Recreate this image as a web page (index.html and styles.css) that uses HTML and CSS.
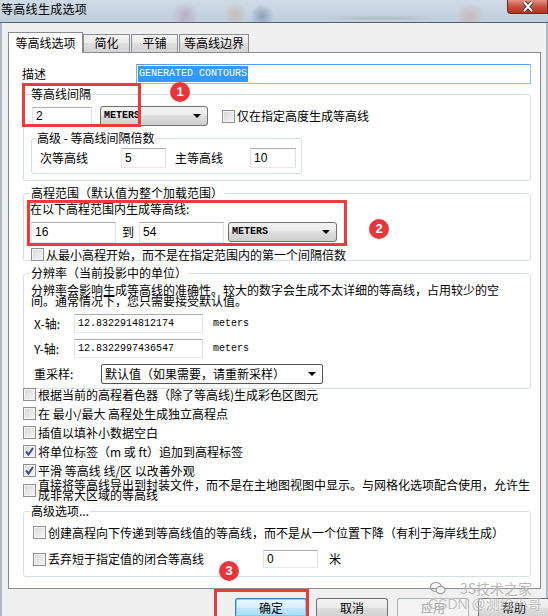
FILE: index.html
```html
<!DOCTYPE html>
<html lang="zh-CN">
<head>
    <meta charset="UTF-8">
    <meta name="viewport" content="width=device-width, initial-scale=1.0">
    <title>等高线生成选项</title>
    <link rel="stylesheet" href="styles.css">
</head>
<body>
<div class="window">
    <div class="titlebar">
        <span class="title">等高线生成选项</span>
        <span class="close">
            <svg width="14" height="11" viewBox="0 0 14 11"><path d="M3 1 L11 10 M11 1 L3 10" stroke="#3a3a3a" stroke-width="4"/><path d="M3 1 L11 10 M11 1 L3 10" stroke="#fff" stroke-width="2"/></svg>
        </span>
    </div>

    <div class="client">
        <div class="tabs">
            <div class="tab active">等高线选项</div>
            <div class="tab t-simplify">简化</div>
            <div class="tab t-tile">平铺</div>
            <div class="tab t-border">等高线边界</div>
        </div>

        <div class="panel">
            <div class="row desc-row">
                <span class="desc-label">描述</span>
                <div class="field desc-field mono"><span class="selected">GENERATED CONTOURS</span></div>
            </div>

            <!-- contour interval -->
            <fieldset class="group g-interval">
                <legend>等高线间隔</legend>
                <div class="row">
                    <div class="field num f-interval">2</div>
                    <div class="select mono-bold s-units">METERS<span class="arrow"></span></div>
                    <span class="cb cb-only"></span>
                    <span class="cb-text">仅在指定高度生成等高线</span>
                </div>
                <fieldset class="group sub">
                    <legend>高级 - 等高线间隔倍数</legend>
                    <div class="row">
                        <span>次等高线</span>
                        <div class="field num f-minor">5</div>
                        <span class="major-label">主等高线</span>
                        <div class="field num f-major">10</div>
                    </div>
                </fieldset>
            </fieldset>

            <!-- elevation range -->
            <fieldset class="group g-range">
                <legend>高程范围（默认值为整个加载范围）</legend>
                <div class="range-label">在以下高程范围内生成等高线:</div>
                <div class="row range-row">
                    <div class="field num f-range">16</div>
                    <span class="to">到</span>
                    <div class="field num f-range f-to">54</div>
                    <div class="select mono-bold s-range">METERS<span class="arrow"></span></div>
                </div>
                <div class="row check-row">
                    <span class="cb"></span>
                    <span class="cb-text">从最小高程开始，而不是在指定范围内的第一个间隔倍数</span>
                </div>
            </fieldset>

            <!-- resolution -->
            <fieldset class="group g-res">
                <legend>分辨率（当前投影中的单位）</legend>
                <div class="res-desc">分辨率会影响生成等高线的准确性。较大的数字会生成不太详细的等高线，占用较少的空间。通常情况下，您只需要接受默认值。</div>
                <div class="row axis-row">
                    <span class="axis-label">X-轴:</span>
                    <div class="field mono f-axis">12.8322914812174</div>
                    <span class="mono unit">meters</span>
                </div>
                <div class="row axis-row">
                    <span class="axis-label">Y-轴:</span>
                    <div class="field mono f-axis">12.8322997436547</div>
                    <span class="mono unit">meters</span>
                </div>
                <div class="row resample-row">
                    <span class="resample-label">重采样:</span>
                    <div class="select s-resample">默认值（如果需要，请重新采样）<span class="arrow"></span></div>
                </div>
            </fieldset>

            <div class="checks">
                <div class="row check-row"><span class="cb"></span><span class="cb-text">根据当前的高程着色器（除了等高线)生成彩色区图元</span></div>
                <div class="row check-row"><span class="cb"></span><span class="cb-text">在 最小/最大 高程处生成独立高程点</span></div>
                <div class="row check-row"><span class="cb"></span><span class="cb-text">插值以填补小数据空白</span></div>
                <div class="row check-row"><span class="cb on"><svg width="11" height="11" viewBox="0 0 11 11"><path d="M2 5.5 L4.5 8.5 L9 2" fill="none" stroke="#3c4f8c" stroke-width="2"/></svg></span><span class="cb-text">将单位标签（m 或 ft）追加到高程标签</span></div>
                <div class="row check-row"><span class="cb on"><svg width="11" height="11" viewBox="0 0 11 11"><path d="M2 5.5 L4.5 8.5 L9 2" fill="none" stroke="#3c4f8c" stroke-width="2"/></svg></span><span class="cb-text">平滑 等高线 线/区 以改善外观</span></div>
                <div class="row check-row two-line"><span class="cb"></span><span class="cb-text">直接将等高线导出到封装文件，而不是在主地图视图中显示。与网格化选项配合使用，允许生成非常大区域的等高线</span></div>
            </div>

            <!-- advanced -->
            <fieldset class="group g-adv">
                <legend>高级选项...</legend>
                <div class="row check-row">
                    <span class="cb"></span>
                    <span class="cb-text">创建高程向下传递到等高线值的等高线，而不是从一个位置下降（有利于海岸线生成）</span>
                </div>
                <div class="row discard-row">
                    <span class="cb"></span>
                    <span class="cb-text discard-label">丢弃短于指定值的闭合等高线</span>
                    <div class="field num f-discard">0</div>
                    <span class="meter">米</span>
                </div>
            </fieldset>
        </div>

        <div class="buttons">
            <div class="btn default">确定</div>
            <div class="btn">取消</div>
            <div class="btn disabled">应用</div>
            <div class="btn">帮助</div>
        </div>
    </div>

    <!-- annotations drawn over the screenshot -->
    <div class="mark mark-1"></div>
    <div class="mark mark-2"></div>
    <div class="mark mark-3"></div>
    <div class="badge badge-1">1</div>
    <div class="badge badge-2">2</div>
    <div class="badge badge-3">3</div>

    <div class="watermark wm-top">
        <svg width="16" height="14" viewBox="0 0 16 14"><ellipse cx="6" cy="6" rx="5.5" ry="4.5" fill="none" stroke="#9a9a9a" stroke-width="1.2"/><ellipse cx="10.5" cy="9" rx="4.5" ry="3.6" fill="#f4f4f4" stroke="#9a9a9a" stroke-width="1.2"/></svg>
        <span>3S技术之家</span>
    </div>
    <div class="watermark wm-bottom">CSDN @测绘小哥</div>
</div>
</body>
</html>
```

FILE: styles.css
```css
* {
    box-sizing: border-box;
}

html, body {
    margin: 0;
}

body {
    width: 548px;
    height: 616px;
    overflow: hidden;
    font-family: "Noto Sans CJK SC", "Noto Sans", sans-serif;
    font-size: 12px;
    line-height: 14px;
    color: #000;
    background: #f0f0f0;
}

.window {
    position: relative;
    height: 616px;
}

/* title bar */
.titlebar {
    height: 23px;
    display: flex;
    justify-content: space-between;
    align-items: flex-start;
    border-bottom: 1px solid #56616c;
    background:
        radial-gradient(circle at 185px 15px, rgba(170, 110, 150, 0.35), transparent 14px),
        radial-gradient(circle at 262px 16px, rgba(60, 90, 130, 0.4), transparent 12px),
        radial-gradient(circle at 235px 14px, rgba(190, 140, 90, 0.3), transparent 12px),
        radial-gradient(ellipse at 380px 18px, rgba(110, 150, 110, 0.3), transparent 60px),
        radial-gradient(circle at 470px 16px, rgba(200, 130, 110, 0.3), transparent 14px),
        linear-gradient(#cfdbe7, #bfcedc);
}

.title {
    font-size: 12px;
    line-height: 17px;
    letter-spacing: 0.3px;
    padding-left: 1px;
}

.close {
    width: 41px;
    height: 14px;
    display: flex;
    justify-content: center;
    align-items: center;
    border: 1px solid #6e2a20;
    border-top: none;
    border-radius: 0 0 0 4px;
    background: linear-gradient(#e39484, #c9503c 50%, #b5321f);
}

/* window client area */
.client {
    height: 593px;
    padding: 9px 5px 0 6px;
    border-left: 2px solid #aeb9c4;
    border-right: 2px solid #aeb9c4;
}

.tabs {
    display: flex;
    align-items: flex-end;
    height: 20px;
}

.tab {
    height: 18px;
    line-height: 16px;
    text-align: center;
    border: 1px solid #898c95;
    border-bottom: none;
    background: linear-gradient(#f3f3f3, #ebebeb 45%, #dedede 50%, #d4d4d4);
}

.tab.active {
    position: relative;
    z-index: 1;
    width: 75px;
    height: 21px;
    margin-bottom: -1px;
    line-height: 19px;
    background: #fff;
}

.t-simplify { width: 47px; }
.t-tile { width: 47px; margin-left: 1px; }
.t-border { width: 70px; margin-left: 1px; }

.panel {
    width: 533px;
    height: 537px;
    padding: 10px 9px 0 14px;
    border: 1px solid #898c95;
    background: #fff;
}

.row {
    display: flex;
    align-items: center;
}

/* inputs */
.field {
    height: 20px;
    display: flex;
    align-items: center;
    padding: 0 3px;
    background: #fff;
    border: 1px solid;
    border-color: #abadb3 #dbdfe6 #e3e9ef #e2e3ea;
    flex: none;
}

.num {
    font-family: "Liberation Sans", sans-serif;
    font-size: 12px;
}

.mono {
    font-family: "Liberation Mono", monospace;
    font-size: 10px;
}

.mono-bold {
    font-family: "Liberation Mono", monospace;
    font-size: 10px;
    font-weight: bold;
}

.select {
    height: 20px;
    display: flex;
    align-items: center;
    padding-left: 3px;
    border: 1px solid #707070;
    border-radius: 3px;
    background: linear-gradient(#f2f2f2, #ebebeb 45%, #dddddd 50%, #cfcfcf);
    flex: none;
}

.arrow {
    margin-left: auto;
    margin-right: 6px;
    width: 0;
    height: 0;
    border-left: 4px solid transparent;
    border-right: 4px solid transparent;
    border-top: 4px solid #000;
}

.cb {
    width: 13px;
    height: 13px;
    flex: none;
    display: flex;
    align-items: center;
    justify-content: center;
    border: 1px solid #8e8f8f;
    background: linear-gradient(135deg, #d6d6d6, #f7f7f7);
    box-shadow: inset 0 0 0 1px #f4f4f4;
}

.cb-text {
    margin-left: 2px;
    white-space: nowrap;
}

.check-row .cb-text {
    line-height: 13px;
}

/* description */
.desc-row {
    height: 21px;
}

.desc-label {
    margin-left: -1px;
}

.desc-field {
    width: 395px;
    margin-left: auto;
    padding-left: 1px;
    border-color: #569de5 #8fbfee #8fbfee #7eb4ea;
}

.selected {
    background: #3399ff;
    color: #fff;
    padding: 1px 1px;
}

/* group boxes */
.group {
    margin: 0;
    min-width: 0;
    padding: 0 0 0 7px;
    border: 1px solid #d5dfe5;
    border-radius: 3px;
}

.group legend {
    padding: 0 1px;
    margin-left: -1px;
    line-height: 14px;
}

.g-interval {
    margin-top: 3px;
    height: 94px;
    padding-top: 5px;
}

.f-interval {
    width: 60px;
    height: 18px;
    margin-left: 1px;
}

.s-units {
    width: 108px;
    margin-left: 8px;
}

.cb-only {
    margin-left: 14px;
}

.sub {
    width: 271px;
    height: 43px;
    margin-top: 5px;
    padding: 3px 0 0 8px;
}

.sub legend {
    margin-left: -4px;
}

.f-minor {
    width: 45px;
    margin-left: 33px;
}

.major-label {
    margin-left: 9px;
}

.f-major {
    width: 46px;
    margin-left: 27px;
}

.g-range {
    margin-top: 5px;
    height: 75px;
    padding-top: 2px;
}

.range-label {
    margin-left: -1px;
}

.range-row {
    margin-top: 5px;
    height: 22px;
}

.f-range {
    width: 85px;
    height: 21px;
}

.to {
    margin-left: 6px;
}

.f-to {
    margin-left: 5px;
}

.s-range {
    width: 109px;
    margin-left: 4px;
}

.g-range .check-row {
    margin-top: 5px;
}

.g-res {
    margin-top: 5px;
    height: 123px;
    padding-top: 4px;
}

.res-desc {
    width: 476px;
    line-height: 11px;
}

.axis-row {
    margin-top: 6px;
}

.res-desc + .axis-row {
    margin-top: 8px;
}

.axis-label {
    width: 40px;
    margin-left: 3px;
    flex: none;
}

.f-axis {
    width: 129px;
    height: 19px;
}

.unit {
    margin-left: 10px;
}

.resample-row {
    margin-top: 6px;
}

.resample-label {
    width: 67px;
    margin-left: 3px;
    flex: none;
}

.s-resample {
    width: 222px;
    background: #fff;
    border-color: #555;
    border-radius: 2px;
}

/* check list */
.checks {
    margin-top: -1px;
    display: flex;
    flex-direction: column;
    gap: 6px;
}

.check-row {
    height: 13px;
}

.checks .two-line {
    height: 22px;
    margin-top: -4px;
}

.two-line .cb-text {
    width: 494px;
    white-space: normal;
    line-height: 10px;
}

.g-adv {
    margin-top: 3px;
    height: 73px;
    padding: 8px 0 0 9px;
}

.g-adv legend {
    margin-left: -3px;
}

.discard-row {
    margin-top: 11px;
    height: 18px;
}

.discard-label {
    width: 215px;
}

.f-discard {
    width: 55px;
    height: 18px;
}

.meter {
    margin-left: 11px;
}

/* dialog buttons, cut off by the bottom edge of the shot */
.buttons {
    display: flex;
    gap: 9px;
    margin-top: 9px;
    padding-left: 227px;
}

.btn {
    width: 72px;
    height: 18px;
    flex: none;
    text-align: center;
    line-height: 14px;
    padding-top: 2px;
    border: 1px solid #707070;
    border-bottom: none;
    border-radius: 3px 3px 0 0;
    background: linear-gradient(#f2f2f2, #ebebeb 50%, #dddddd 55%, #d2d2d2);
}

.btn.default {
    border-color: #3c7fb1;
    background: linear-gradient(#eaf6fd, #d9f0fc 50%, #bee6fd 55%, #acdbf5);
    box-shadow: inset 0 0 0 1px #7fd0f4;
}

.btn.disabled {
    color: #a0a0a0;
    border-color: #adb2b5;
    background: #f4f4f4;
}

/* red annotation marks */
.mark {
    position: absolute;
    border: 3px solid #ef3a3c;
}

.mark-1 { left: 22px; top: 83px; width: 119px; height: 44px; }
.mark-2 { left: 27px; top: 200px; width: 320px; height: 46px; }
.mark-3 { left: 214px; top: 589px; width: 95px; height: 40px; }

.badge {
    position: absolute;
    width: 20px;
    height: 20px;
    border-radius: 50%;
    background: #e8353a;
    color: #fff;
    font-family: "Liberation Sans", sans-serif;
    font-weight: bold;
    font-size: 13px;
    line-height: 20px;
    text-align: center;
}

.badge-1 { left: 170px; top: 82px; }
.badge-2 { left: 369px; top: 219px; }
.badge-3 { left: 219px; top: 561px; }

/* watermark */
.watermark {
    position: absolute;
    color: rgba(120, 120, 120, 0.55);
    text-shadow: 0 0 2px rgba(255, 255, 255, 0.9);
    white-space: nowrap;
}

.wm-top {
    left: 430px;
    top: 580px;
    display: flex;
    align-items: center;
    gap: 14px;
    font-size: 14px;
    line-height: 16px;
}

.wm-bottom {
    left: 428px;
    top: 595px;
    font-family: "Liberation Sans", "Noto Sans CJK SC", sans-serif;
    font-size: 14px;
    line-height: 18px;
    color: rgba(130, 130, 130, 0.5);
}
```
